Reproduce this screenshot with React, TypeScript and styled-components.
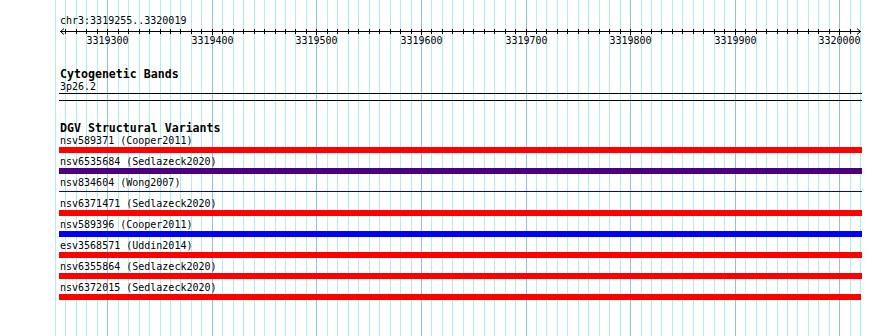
import React from 'react'
import styled, { createGlobalStyle } from 'styled-components'

const START = 3319255
const END = 3320019
const ORIGIN = 60.2
const PX_PER_BP = 1.0457
const TRACK_LEFT = 59

// bp -> page x
const xOf = (bp: number) => ORIGIN + (bp - START) * PX_PER_BP

const GlobalStyle = createGlobalStyle`
  html, body { margin: 0; padding: 0; background: #fff; }
  body {
    font-family: "DejaVu Sans Mono", "Liberation Mono", monospace;
    color: #000;
  }
`

const Panel = styled.div`
  position: relative;
  width: 890px;
  height: 336px;
  overflow: hidden;
  background: #fff;
`

const GridLayer = styled.svg`
  position: absolute;
  left: 0;
  top: 0;
  width: 890px;
  height: 336px;
  z-index: 0;
`

const Tracks = styled.div`
  position: relative;
  z-index: 1;
  margin-left: ${TRACK_LEFT}px;
  width: 803px;
  display: flex;
  flex-direction: column;
`

const PositionLabel = styled.div`
  margin-top: 15px;
  padding-left: 1px;
  font-size: 10px;
  line-height: 12px;
  height: 12px;
  white-space: pre;
`

const RulerSvg = styled.svg`
  display: block;
  width: 803px;
  height: 20px;
  font-family: "DejaVu Sans Mono", "Liberation Mono", monospace;
  font-size: 10px;
`

const TrackTitle = styled.div<{ $gap: number }>`
  margin-top: ${p => p.$gap}px;
  padding-left: 1px;
  font-size: 11.6px;
  font-weight: bold;
  line-height: 14px;
  height: 14px;
  white-space: pre;
`

const FeatureLabel = styled.div`
  padding-left: 1px;
  font-size: 10px;
  line-height: 12px;
  height: 12px;
  white-space: pre;
`

const Band = styled.div`
  height: 6px;
  border-top: 1px solid #000;
  border-bottom: 1px solid #000;
`

const Bar = styled.div<{ $color: string; $thin?: boolean; $trim?: number }>`
  background: ${p => p.$color};
  height: ${p => (p.$thin ? 1 : 6)}px;
  margin: ${p => (p.$thin ? '2px 0 6px' : '0 0 3px')};
  margin-right: ${p => p.$trim ?? 0}px;
`

const variants = [
  { name: 'nsv589371 (Cooper2011)', color: '#ff0000' },
  { name: 'nsv6535684 (Sedlazeck2020)', color: '#4b0082' },
  { name: 'nsv834604 (Wong2007)', color: '#0000cd', thin: true },
  { name: 'nsv6371471 (Sedlazeck2020)', color: '#ff0000' },
  { name: 'nsv589396 (Cooper2011)', color: '#0000ff' },
  { name: 'esv3568571 (Uddin2014)', color: '#ff0000' },
  { name: 'nsv6355864 (Sedlazeck2020)', color: '#ff0000' },
  { name: 'nsv6372015 (Sedlazeck2020)', color: '#ff0000', trim: 1 },
]

const gridStops: number[] = []
for (let p = 3319250; p <= 3320020; p += 10) gridStops.push(p)

function Grid() {
  return (
    <GridLayer viewBox="0 0 890 336">
      {gridStops.map(p => (
        <rect
          key={p}
          x={Math.round(xOf(p))}
          y={0}
          width={1}
          height={336}
          fill={p % 100 === 0 ? '#87c4e8' : '#aeeef0'}
        />
      ))}
    </GridLayer>
  )
}

function Ruler() {
  const lx = (bp: number) => Math.round(xOf(bp)) - TRACK_LEFT + 0.5
  const ticks = gridStops.filter(p => p > START && p < END)
  const majors = ticks.filter(p => p % 100 === 0)
  return (
    <RulerSvg viewBox="0 0 803 20">
      <line x1={1} y1={4.5} x2={802} y2={4.5} stroke="#000" />
      <polyline points="5,1.5 1.5,4.5 5,7.5" fill="none" stroke="#000" />
      <polyline points="798,1.5 801.5,4.5 798,7.5" fill="none" stroke="#000" />
      {ticks.map(p => (
        <line key={p} x1={lx(p)} y1={2} x2={lx(p)} y2={p % 100 === 0 ? 8 : 7} stroke="#000" />
      ))}
      {majors.map(p => (
        <text key={p} x={lx(p)} y={17} textAnchor="middle" fill="#000">
          {p}
        </text>
      ))}
    </RulerSvg>
  )
}

export default function App() {
  return (
    <>
      <GlobalStyle />
      <Panel>
        <Grid />
        <Tracks>
          <PositionLabel>chr3:3319255..3320019</PositionLabel>
          <Ruler />

          <TrackTitle $gap={20}>Cytogenetic Bands</TrackTitle>
          <FeatureLabel>3p26.2</FeatureLabel>
          <Band />

          <TrackTitle $gap={20}>DGV Structural Variants</TrackTitle>
          {variants.map(v => (
            <React.Fragment key={v.name}>
              <FeatureLabel>{v.name}</FeatureLabel>
              <Bar $color={v.color} $thin={v.thin} $trim={v.trim} />
            </React.Fragment>
          ))}
        </Tracks>
      </Panel>
    </>
  )
}
